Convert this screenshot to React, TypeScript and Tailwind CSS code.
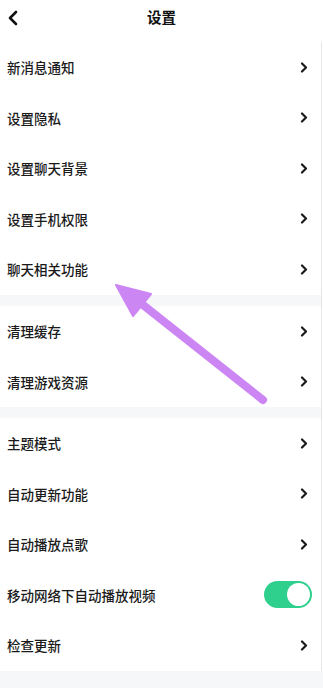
import React from "react";

const Chevron = () => (
  <svg width="8" height="11" viewBox="0 0 8 11" className="shrink-0">
    <path d="M2 1.5 L6 5.5 L2 9.5" fill="none" stroke="#1a1a1a" strokeWidth="2.2" strokeLinecap="round" strokeLinejoin="round" />
  </svg>
);

const Row = ({ label, toggle }: { label: string; toggle?: boolean }) => (
  <div className="flex h-[50.5px] items-center justify-between pl-[7px] pr-[13px]">
    <span className="text-[13.5px] font-medium text-[#1a1a1a]">{label}</span>
    {toggle ? (
      <div className="-mr-[4px] flex h-[27px] w-[48px] items-center justify-end rounded-full bg-[#2fcf8d] p-[2px]">
        <div className="h-[23px] w-[23px] rounded-full bg-white" />
      </div>
    ) : (
      <Chevron />
    )}
  </div>
);

export default function App() {
  return (
    <div
      className="relative h-[688px] w-[323px] overflow-hidden bg-white"
      style={{ fontFamily: '"Noto Sans CJK SC", "Noto Sans", sans-serif' }}
    >
      <div className="relative flex h-[42px] items-center justify-center">
        <svg width="12" height="16" viewBox="0 0 12 16" className="absolute left-[7px] top-[10px]">
          <path d="M9 2 L3 8 L9 14" fill="none" stroke="#111" strokeWidth="2.6" strokeLinecap="round" strokeLinejoin="round" />
        </svg>
        <span className="-mt-[8px] text-[14.5px] font-bold text-[#111]">设置</span>
      </div>
      <div className="border-r border-[#e6e6e6] mr-[1px]">
        <Row label="新消息通知" />
        <Row label="设置隐私" />
        <Row label="设置聊天背景" />
        <Row label="设置手机权限" />
        <Row label="聊天相关功能" />
        <div className="h-[11.5px] bg-[#f6f7f9]" />
        <Row label="清理缓存" />
        <Row label="清理游戏资源" />
        <div className="h-[11px] bg-[#f6f7f9]" />
        <Row label="主题模式" />
        <Row label="自动更新功能" />
        <Row label="自动播放点歌" />
        <Row label="移动网络下自动播放视频" toggle />
        <Row label="检查更新" />
      </div>
      <div className="h-[20px] bg-[#f6f7f9]" />
      <svg width="323" height="688" viewBox="0 0 323 688" className="pointer-events-none absolute left-0 top-0">
        <line x1="263" y1="400" x2="138" y2="301" stroke="#cc86f4" strokeWidth="8" strokeLinecap="round" />
        <polygon points="116,285 151,294 133,316" fill="#cc86f4" stroke="#cc86f4" strokeWidth="2" strokeLinejoin="round" />
      </svg>
    </div>
  );
}
